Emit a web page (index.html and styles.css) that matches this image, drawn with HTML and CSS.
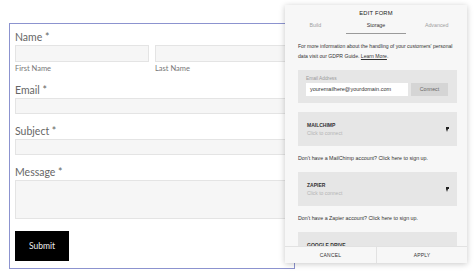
FILE: index.html
```html
<!DOCTYPE html>
<html lang="en">
<head>
  <meta charset="UTF-8">
  <title>Edit Form</title>
  <link rel="stylesheet" href="styles.css">
</head>
<body>
  <div class="page">
    <!-- Form preview -->
    <form class="contact-form">
      <div class="field">
        <div class="label">Name *</div>
        <div class="name-row">
          <div>
            <div class="input"></div>
            <div class="caption">First Name</div>
          </div>
          <div>
            <div class="input"></div>
            <div class="caption">Last Name</div>
          </div>
        </div>
      </div>
      <div class="field">
        <div class="label">Email *</div>
        <div class="input"></div>
      </div>
      <div class="field">
        <div class="label">Subject *</div>
        <div class="input"></div>
      </div>
      <div class="field">
        <div class="label">Message *</div>
        <div class="input textarea"></div>
      </div>
      <div class="submit">Submit</div>
    </form>

    <!-- Edit form panel -->
    <div class="panel">
      <div class="panel-title">EDIT FORM</div>
      <div class="tabs">
        <div class="tab">Build</div>
        <div class="tab active">Storage</div>
        <div class="tab">Advanced</div>
      </div>
      <div class="panel-body">
        <p class="info">For more information about the handling of your customers' personal data visit our GDPR Guide. <span class="link">Learn More</span>.</p>

        <div class="box email-box">
          <div class="box-label">Email Address</div>
          <div class="email-row">
            <div class="email-input">youremailhere@yourdomain.com</div>
            <div class="connect">Connect</div>
          </div>
        </div>

        <div class="box service">
          <div>
            <div class="service-name">MAILCHIMP</div>
            <div class="service-sub">Click to connect</div>
          </div>
          <span class="caret"></span>
        </div>
        <p class="signup">Don't have a MailChimp account? Click here to sign up.</p>

        <div class="box service">
          <div>
            <div class="service-name">ZAPIER</div>
            <div class="service-sub">Click to connect</div>
          </div>
          <span class="caret"></span>
        </div>
        <p class="signup">Don't have a Zapier account? Click here to sign up.</p>

        <div class="box service">
          <div>
            <div class="service-name">GOOGLE DRIVE</div>
            <div class="service-sub">Click to connect</div>
          </div>
          <span class="caret"></span>
        </div>
      </div>
      <div class="panel-footer">
        <div class="footer-btn">CANCEL</div>
        <div class="footer-btn">APPLY</div>
      </div>
    </div>
  </div>
</body>
</html>
```

FILE: styles.css
```css
* {
  margin: 0;
  padding: 0;
  box-sizing: border-box;
}

body {
  font-family: Lato, 'Liberation Sans', sans-serif;
  background-color: #fff;
  color: #333;
  overflow: hidden;
}

.page {
  position: relative;
  width: 474px;
  height: 273px;
  padding: 23px 0 0 9px;
}

/* Form preview */
.contact-form {
  width: 286px;
  height: 246px;
  border: 1px solid #8c93cf;
  padding: 7px 5px 0 5px;
}

.field {
  margin-bottom: 11px;
}

.field:first-child {
  margin-bottom: 10px;
}

.label {
  font-size: 10.5px;
  line-height: 12px;
  color: #666;
  margin-bottom: 2px;
}

.name-row {
  display: grid;
  grid-template-columns: 1fr 1fr;
  gap: 6px;
}

.input {
  height: 16px;
  background-color: #f6f6f6;
  border: 1px solid #e4e4e4;
}

.name-row .input {
  height: 17px;
}

.textarea {
  height: 39px;
}

.caption {
  font-size: 7.5px;
  line-height: 10px;
  margin-top: 2px;
  color: #777;
}

.submit {
  width: 54px;
  height: 30px;
  margin-top: 12px;
  background-color: #000;
  color: #eee;
  font-size: 8.5px;
  display: flex;
  align-items: center;
  justify-content: center;
}

/* Edit form panel */
.panel {
  position: absolute;
  left: 285px;
  top: 5px;
  width: 182px;
  height: 258px;
  background-color: #f7f7f7;
  box-shadow: 0 1px 6px rgba(0, 0, 0, 0.22);
  font-family: 'Liberation Sans', Arial, sans-serif;
  display: flex;
  flex-direction: column;
  overflow: hidden;
}

.panel-title {
  text-align: center;
  font-size: 5.8px;
  letter-spacing: 0.2px;
  line-height: 9px;
  padding-top: 4px;
  color: #222;
}

.tabs {
  display: grid;
  grid-template-columns: repeat(3, 1fr);
  margin-top: 2px;
}

.tab {
  text-align: center;
  font-size: 5.3px;
  line-height: 10px;
  padding-bottom: 3px;
  color: #a0a0a0;
  border-bottom: 1px solid transparent;
}

.tab.active {
  color: #333;
  border-bottom-color: #9a9a9a;
}

.panel-body {
  flex: 1;
  overflow: hidden;
  padding: 7px 10px 0 13px;
}

.info {
  font-size: 5.1px;
  line-height: 10px;
  color: #333;
}

.link {
  text-decoration: underline;
}

.box {
  background-color: #e6e6e6;
}

.email-box {
  margin-top: 9px;
  padding: 5px 9px 7px 8px;
}

.box-label {
  font-size: 4.8px;
  line-height: 8px;
  color: #9a9a9a;
}

.email-row {
  display: flex;
  gap: 3px;
}

.email-input {
  width: 102px;
  height: 13px;
  background-color: #fff;
  font-size: 5.5px;
  line-height: 13px;
  padding-left: 4px;
  color: #333;
}

.connect {
  flex: 1;
  height: 13px;
  background-color: #d5d5d5;
  font-size: 5.2px;
  line-height: 13px;
  text-align: center;
  color: #666;
}

.service {
  margin-top: 9px;
  height: 34px;
  padding: 0 9px 0 9px;
  display: flex;
  align-items: center;
  justify-content: space-between;
}

.service-name {
  font-size: 5px;
  font-weight: bold;
  line-height: 8px;
  color: #333;
}

.service-sub {
  font-size: 5px;
  line-height: 8px;
  color: #b5b5b5;
}

.caret {
  width: 0;
  height: 0;
  margin-top: 2px;
  border-left: 1.5px solid transparent;
  border-right: 1.5px solid transparent;
  border-top: 3px solid #222;
  position: relative;
}

.caret::before {
  content: "";
  position: absolute;
  left: -1.5px;
  top: -4.5px;
  width: 3px;
  height: 1.5px;
  background-color: #222;
}

.signup {
  margin-top: 7px;
  font-size: 5.3px;
  line-height: 10px;
  color: #333;
}

.panel-footer {
  height: 17px;
  display: grid;
  grid-template-columns: 1fr 1fr;
  border-top: 1px solid #e2e2e2;
  background-color: #f7f7f7;
  position: relative;
}

.footer-btn {
  font-size: 5px;
  letter-spacing: 0.2px;
  color: #333;
  display: flex;
  align-items: center;
  justify-content: center;
}

.footer-btn + .footer-btn {
  border-left: 1px solid #e2e2e2;
}
```
